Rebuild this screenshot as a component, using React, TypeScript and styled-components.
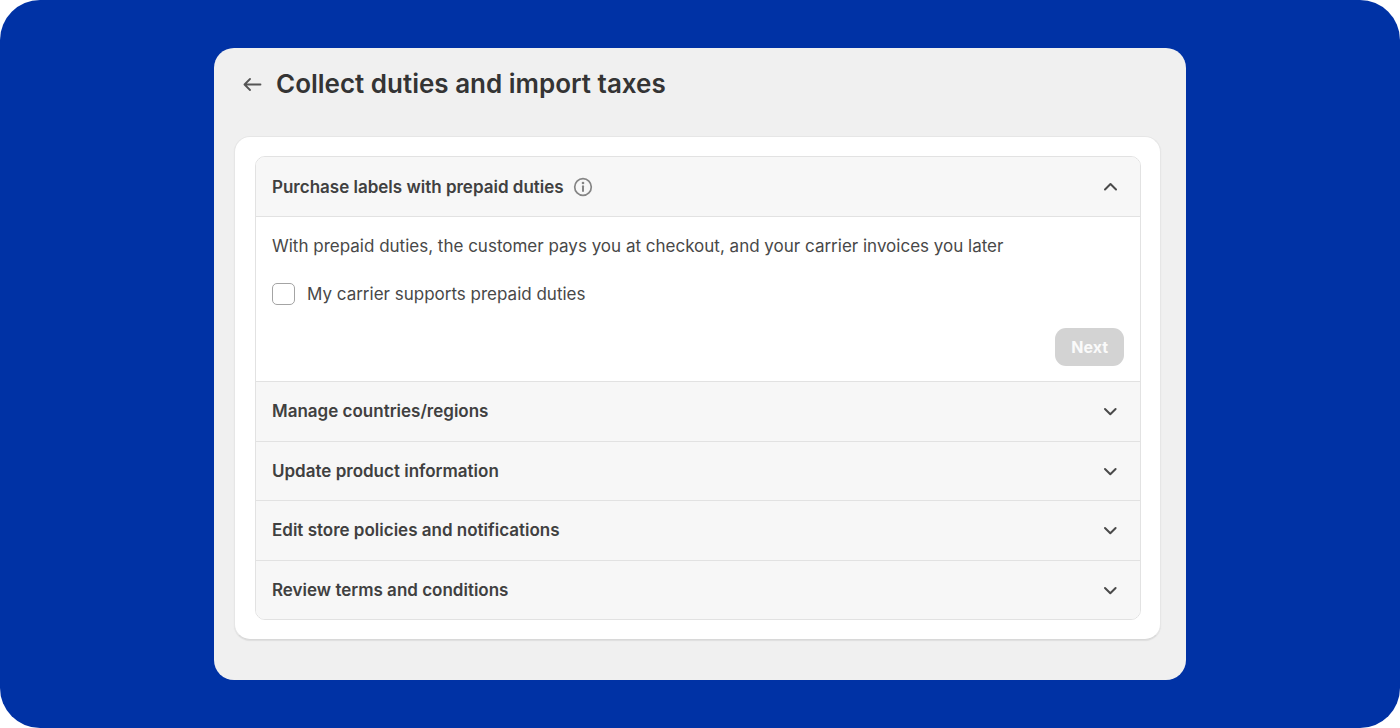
import React, { useState } from 'react';
import styled, { createGlobalStyle } from 'styled-components';

const GlobalStyle = createGlobalStyle`
  *, *::before, *::after { box-sizing: border-box; }
  body {
    margin: 0;
    background: #ffffff;
    color: #484848;
    font-family: Inter, 'Liberation Sans', sans-serif;
    font-size: 17px;
    line-height: 24px;
  }
`;

const Backdrop = styled.main`
  min-height: 100vh;
  padding: 48px 24px;
  border-radius: 40px;
  background: #0032a5;
`;

const Panel = styled.section`
  max-width: 972px;
  margin: 0 auto;
  padding: 20px 25px 40px 20px;
  border-radius: 20px;
  background: #f0f0f0;
`;

const PageHeader = styled.header`
  display: flex;
  align-items: center;
  gap: 12px;
  padding: 0 8px;
  margin-bottom: 36px;
`;

const BackButton = styled.button`
  display: flex;
  padding: 0;
  border: 0;
  background: none;
  color: #555555;
  cursor: pointer;
`;

const Title = styled.h1`
  margin: 0;
  color: #343434;
  font-size: 26px;
  line-height: 32px;
  font-weight: 600;
`;

const Card = styled.div`
  padding: 19px 19px 19px 20px;
  border: 1px solid #e6e6e6;
  border-bottom-color: #d8d8d8;
  border-radius: 16px;
  background: #ffffff;
  box-shadow: 0 1px 1px #dedede;
`;

const Accordion = styled.div`
  display: flex;
  flex-direction: column;
  min-height: 464px;
  border: 1px solid #e2e2e2;
  border-radius: 10px;
  overflow: hidden;
`;

const Item = styled.section<{ $open: boolean }>`
  display: flex;
  flex-direction: column;
  flex-grow: ${({ $open }) => ($open ? 0 : 1)};

  & + & { border-top: 1px solid #e2e2e2; }
`;

const ItemHeader = styled.div<{ $open: boolean }>`
  display: flex;
  align-items: center;
  flex-grow: 1;
  gap: 8px;
  min-height: ${({ $open }) => ($open ? 59 : 58)}px;
  padding: 0 18px 0 16px;
  background: #f7f7f7;
`;

const ItemTitle = styled.h2`
  margin: 0;
  color: #404040;
  font-size: 17px;
  line-height: 24px;
  font-weight: 600;
`;

const IconButton = styled.button<{ $end?: boolean }>`
  display: flex;
  padding: 0;
  margin-left: ${({ $end }) => ($end ? 'auto' : '0')};
  border: 0;
  background: none;
  color: ${({ $end }) => ($end ? '#4a4a4a' : '#858585')};
  cursor: pointer;
`;

const ItemBody = styled.div`
  display: flex;
  flex-direction: column;
  padding: 17px 16px 15px;
  border-top: 1px solid #e2e2e2;
  background: #ffffff;
`;

const Description = styled.p`
  margin: 0 0 24px;
`;

const CheckLabel = styled.label`
  display: flex;
  align-items: center;
  align-self: flex-start;
  gap: 12px;
  margin-bottom: 22px;
`;

const Checkbox = styled.input`
  appearance: none;
  width: 23px;
  height: 22px;
  margin: 0;
  border: 1px solid #a4a4a4;
  border-radius: 5px;
  background: #ffffff;

  &:checked { background: #434343; }
`;

const NextButton = styled.button`
  align-self: flex-end;
  padding: 7px 16px;
  border: 0;
  border-radius: 11px;
  background: #d3d3d3;
  color: #fafafa;
  font: inherit;
  font-size: 16px;
  font-weight: 700;
`;

const ArrowLeftIcon = () => (
  <svg width="22" height="22" viewBox="0 0 22 22" fill="none" stroke="currentColor" strokeWidth="1.800" strokeLinecap="round" strokeLinejoin="round" aria-hidden="true">
    <path d="M18.500 11.500H3M8 6L2.500 11.500L8 17" />
  </svg>
);

const ChevronIcon = ({ up }: { up: boolean }) => (
  <svg width="24" height="24" viewBox="0 0 24 24" fill="none" stroke="currentColor" strokeWidth="2" strokeLinecap="round" strokeLinejoin="round" aria-hidden="true">
    <path d={up ? 'M7 14.500L12.500 9L18 14.500' : 'M7 10L12.300 15.200L17.600 10'} />
  </svg>
);

const InfoIcon = () => (
  <svg width="22" height="22" viewBox="0 0 22 22" fill="none" stroke="currentColor" strokeWidth="1.700" aria-hidden="true">
    <circle cx="11" cy="11" r="8.300" />
    <path d="M11 10.300V15" strokeWidth="2" strokeLinecap="round" />
    <circle cx="11" cy="7" r="1.300" fill="currentColor" stroke="none" />
  </svg>
);

const steps = [
  'Purchase labels with prepaid duties',
  'Manage countries/regions',
  'Update product information',
  'Edit store policies and notifications',
  'Review terms and conditions',
];

export default function App() {
  const [openStep, setOpenStep] = useState(0);
  const [supported, setSupported] = useState(false);

  return (
    <>
      <GlobalStyle />
      <Backdrop>
        <Panel>
          <PageHeader>
            <BackButton type="button" aria-label="Back"><ArrowLeftIcon /></BackButton>
            <Title>Collect duties and import taxes</Title>
          </PageHeader>
          <Card>
            <Accordion>
              {steps.map((step, index) => {
                const open = index === openStep;
                return (
                  <Item key={step} $open={open}>
                    <ItemHeader $open={open}>
                      <ItemTitle>{step}</ItemTitle>
                      {index === 0 && (
                        <IconButton type="button" aria-label="About prepaid duties"><InfoIcon /></IconButton>
                      )}
                      <IconButton
                        $end
                        type="button"
                        aria-label={step}
                        aria-expanded={open}
                        onClick={() => setOpenStep(open ? -1 : index)}
                      >
                        <ChevronIcon up={open} />
                      </IconButton>
                    </ItemHeader>
                    {open && index === 0 && (
                      <ItemBody>
                        <Description>
                          With prepaid duties, the customer pays you at checkout, and your carrier invoices you later
                        </Description>
                        <CheckLabel>
                          <Checkbox
                            type="checkbox"
                            checked={supported}
                            onChange={(event) => setSupported(event.target.checked)}
                          />
                          My carrier supports prepaid duties
                        </CheckLabel>
                        <NextButton type="button" disabled={!supported}>Next</NextButton>
                      </ItemBody>
                    )}
                  </Item>
                );
              })}
            </Accordion>
          </Card>
        </Panel>
      </Backdrop>
    </>
  );
}
